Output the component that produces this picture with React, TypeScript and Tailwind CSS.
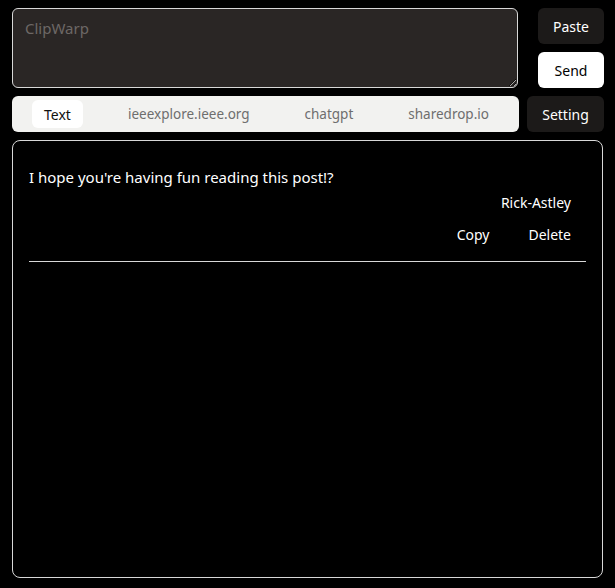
import React from "react";

export default function App() {
  const font = { fontFamily: '"Noto Sans", "Liberation Sans", sans-serif' };
  return (
    <div className="w-[615px] h-[588px] bg-black text-white" style={font}>
      <div className="flex flex-col px-3 pt-2 gap-2">
        <div className="flex items-start gap-5">
          <textarea
            placeholder="ClipWarp"
            className="w-[506px] h-[80px] shrink-0 rounded-md border border-[#d8d8d8] bg-[#2a2625] px-3 py-2 text-[15px] text-white placeholder:text-[#6d6866] outline-none resize-y"
          />
          <div className="flex flex-col gap-2">
            <button className="w-[66px] h-[36px] rounded-md bg-[#1c1a19] text-[14px] text-white">Paste</button>
            <button className="w-[66px] h-[36px] rounded-md bg-white text-[14px] text-black">Send</button>
          </div>
        </div>
        <div className="flex items-center gap-2">
          <div className="w-[507px] h-[36px] shrink-0 rounded-md bg-[#f2f2f0] flex items-center pl-5 text-[13.5px] text-[#6e6e6e]">
            <div className="w-[51px] h-[28px] rounded-md bg-white text-[#111] text-[14px] flex items-center justify-center">Text</div>
            <span className="ml-[45px]">ieeexplore.ieee.org</span>
            <span className="ml-[55px]">chatgpt</span>
            <span className="ml-[55px]">sharedrop.io</span>
          </div>
          <button className="w-[77px] h-[36px] shrink-0 rounded-md bg-[#1c1a19] text-[14px] text-white">Setting</button>
        </div>
        <div className="h-[438px] rounded-lg border border-[#d8d8d8] bg-black px-4 pt-[25px]">
          <div className="text-[15px] text-white leading-[22px]">I hope you're having fun reading this post!?</div>
          <div className="flex justify-end pr-[15px] mt-[5px] text-[14px] leading-[20px]">Rick-Astley</div>
          <div className="flex justify-end gap-[39px] pr-[15px] mt-[12px] text-[14px] leading-[20px]">
            <span>Copy</span>
            <span>Delete</span>
          </div>
          <div className="mt-[16px] border-t border-[#d8d8d8]" />
        </div>
      </div>
    </div>
  );
}
